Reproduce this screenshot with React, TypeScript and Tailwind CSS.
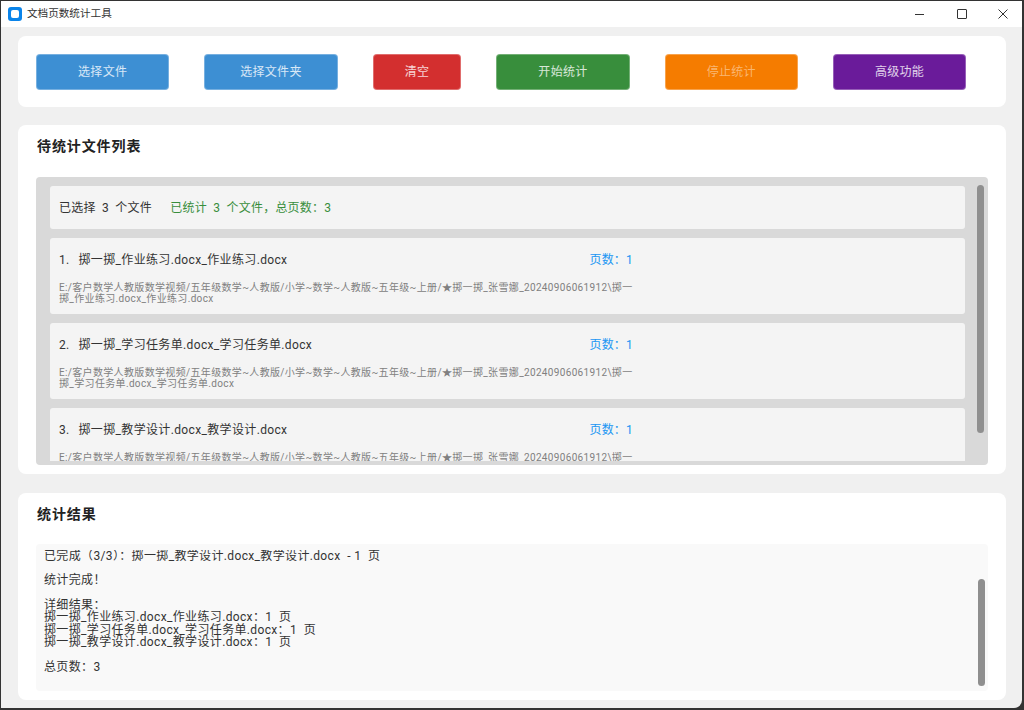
const font = { fontFamily: '"Roboto","Noto Sans CJK SC",sans-serif' };

function Btn({ label, w, bg, text = "text-white/80" }: { label: string; w: string; bg: string; text?: string }) {
  return (
    <div className={`${w} ${bg} ${text} h-[36px] rounded-[4px] border border-white/30 flex items-center justify-center text-[12px] tracking-[0.3px]`}>
      {label}
    </div>
  );
}

function Item({ n, name, a }: { n: number; name: string; a: string }) {
  return (
    <div className="shrink-0 h-[76px] rounded-[3px] bg-[#f4f4f4] pl-[9px] pt-[14px]">
      <div className="flex w-[574px] justify-between h-[16px] items-center text-[12px] tracking-[0.35px] text-[#333333]">
        <span className="flex">
          <span className="w-[19.5px]">{n}.</span>
          <span>{name}</span>
        </span>
        <span className="text-[#2196f3] tracking-[0.2px]">页数：1</span>
      </div>
      <div className="mt-[14px] text-[10px] leading-[11px] tracking-[0.34px] text-[#808080] whitespace-nowrap">
        <div>E:/客户数学人教版数学视频/五年级数学~人教版/小学~数学~人教版~五年级~上册/★掷一掷_张雪娜_20240906061912\掷一</div>
        <div>掷_{a}</div>
      </div>
    </div>
  );
}

export default function App() {
  return (
    <div className="h-[710px] w-[1024px] bg-[#333333] overflow-hidden" style={font}>
      <div className="ml-px mt-px mr-[2px] h-[707px] rounded-br-[8px] bg-[#f0f0f0] flex flex-col overflow-hidden">
        <div className="h-[26px] shrink-0 bg-white flex items-center">
          <div className="ml-[7px] w-[14px] h-[14px] rounded-[3px] bg-[#0a84ea] flex items-center justify-center">
            <div className="w-[8px] h-[8px] rounded-[2px] bg-white" />
          </div>
          <span className="ml-[5px] text-[10.6px] text-[#333333]">文档页数统计工具</span>
          <div className="ml-auto flex items-center text-[#333333]">
            <svg width="12" height="12" viewBox="0 0 12 12" className="mr-[30px]"><path d="M1 6.5h9" stroke="currentColor" strokeWidth="1" /></svg>
            <svg width="12" height="12" viewBox="0 0 12 12" className="mr-[29px]"><rect x="1.5" y="1.5" width="9" height="9" rx="0.5" fill="none" stroke="currentColor" strokeWidth="1" /></svg>
            <svg width="12" height="12" viewBox="0 0 12 12" className="mr-[13px]"><path d="M1.5 1.5l9 9M10.5 1.5l-9 9" stroke="currentColor" strokeWidth="1" /></svg>
          </div>
        </div>

        <div className="flex-1 pl-[17px] pr-[16px] pt-[9px] flex flex-col min-h-0">
          <div className="h-[71px] shrink-0 rounded-[8px] bg-white pl-[18px] pt-[18px] flex gap-[35px]">
            <Btn label="选择文件" w="w-[133.3px]" bg="bg-[#3d8fd3]" />
            <Btn label="选择文件夹" w="w-[133.3px]" bg="bg-[#3d8fd3]" />
            <Btn label="清空" w="w-[88.7px]" bg="bg-[#d32f2f]" />
            <Btn label="开始统计" w="w-[133.3px]" bg="bg-[#388e3c]" />
            <Btn label="停止统计" w="w-[133.3px]" bg="bg-[#f57c00]" text="text-white/45" />
            <Btn label="高级功能" w="w-[133.3px]" bg="bg-[#6a1b9a]" />
          </div>

          <div className="mt-[18px] h-[349px] shrink-0 rounded-[8px] bg-white px-[18px] pt-[12px]">
            <div className="ml-px h-[18px] flex items-center text-[14px] font-bold tracking-[0.9px] text-[#222222]">待统计文件列表</div>
            <div className="relative mt-[22px] h-[288px] w-[952px] rounded-[4px] bg-[#d9d9d9] overflow-hidden pl-[14px] pt-[9px]">
              <div className="h-[275px] w-[915px] overflow-hidden flex flex-col gap-[9px]">
                <div className="shrink-0 h-[43px] rounded-[3px] bg-[#f4f4f4] pl-[9px] pt-[1px] flex items-center text-[12px] tracking-[0.2px]">
                  <span className="text-[#333333]">已选择 &nbsp;3 &nbsp;个文件</span>
                  <span className="ml-[18.5px] text-[#388e3c]">已统计 &nbsp;3 &nbsp;个文件，总页数：3</span>
                </div>
                <Item n={1} name="掷一掷_作业练习.docx_作业练习.docx" a="作业练习.docx_作业练习.docx" />
                <Item n={2} name="掷一掷_学习任务单.docx_学习任务单.docx" a="学习任务单.docx_学习任务单.docx" />
                <Item n={3} name="掷一掷_教学设计.docx_教学设计.docx" a="教学设计.docx_教学设计.docx" />
              </div>
              <div className="absolute left-[941px] top-[8px] w-[7px] h-[248px] rounded-full bg-[#8f8f8f]" />
            </div>
          </div>

          <div className="mt-[19px] h-[207px] shrink-0 rounded-[8px] bg-white px-[18px] pt-[12px]">
            <div className="ml-px h-[18px] flex items-center text-[14px] font-bold tracking-[0.9px] text-[#222222]">统计结果</div>
            <div className="relative mt-[21px] h-[147px] w-[952px] rounded-[4px] bg-[#f9f9f9] pl-[8px] pt-[6px]">
              <div className="h-[136px] overflow-hidden">
                <div className="text-[12px] leading-[12.33px] tracking-[0.35px] text-[#333333] whitespace-pre">
                  <div className="-mt-[0.3px]">已完成（3/3）：掷一掷_教学设计.docx_教学设计.docx  - 1  页</div>
                  <div>&nbsp;</div>
                  <div>统计完成！</div>
                  <div>&nbsp;</div>
                  <div>详细结果：</div>
                  <div>掷一掷_作业练习.docx_作业练习.docx：1  页</div>
                  <div>掷一掷_学习任务单.docx_学习任务单.docx：1  页</div>
                  <div>掷一掷_教学设计.docx_教学设计.docx：1  页</div>
                  <div>&nbsp;</div>
                  <div>总页数：3</div>
                </div>
              </div>
              <div className="absolute left-[942px] top-[35px] w-[7px] h-[107px] rounded-full bg-[#8f8f8f]" />
            </div>
          </div>
        </div>
      </div>
    </div>
  );
}
